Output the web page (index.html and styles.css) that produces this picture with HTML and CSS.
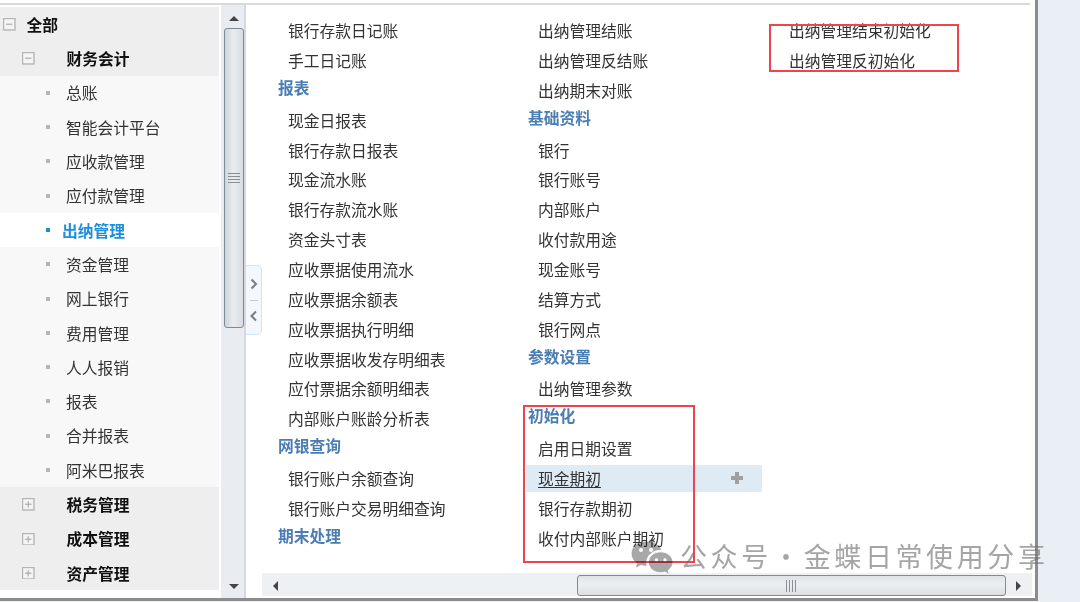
FILE: index.html
```html
<!DOCTYPE html>
<html lang="zh-CN">
<head>
<meta charset="utf-8">
<title>出纳管理</title>
<link rel="stylesheet" href="styles.css">
</head>
<body>
<div class="window">
  <div class="topline"></div>
  <div class="content">
    <nav class="sidebar">
      <div class="node root"><svg class="box" viewBox="0 0 12 12"><rect x=".5" y=".5" width="11" height="11"/><path d="M3 6h6"/></svg><span>全部</span></div>
      <div class="node group"><svg class="box" viewBox="0 0 12 12"><rect x=".5" y=".5" width="11" height="11"/><path d="M3 6h6"/></svg><span>财务会计</span></div>
      <div class="node leaf"><i></i><span>总账</span></div>
      <div class="node leaf"><i></i><span>智能会计平台</span></div>
      <div class="node leaf"><i></i><span>应收款管理</span></div>
      <div class="node leaf"><i></i><span>应付款管理</span></div>
      <div class="node leaf active"><i></i><span>出纳管理</span></div>
      <div class="node leaf"><i></i><span>资金管理</span></div>
      <div class="node leaf"><i></i><span>网上银行</span></div>
      <div class="node leaf"><i></i><span>费用管理</span></div>
      <div class="node leaf"><i></i><span>人人报销</span></div>
      <div class="node leaf"><i></i><span>报表</span></div>
      <div class="node leaf"><i></i><span>合并报表</span></div>
      <div class="node leaf"><i></i><span>阿米巴报表</span></div>
      <div class="node group"><svg class="box" viewBox="0 0 12 12"><rect x=".5" y=".5" width="11" height="11"/><path d="M3 6h6M6 3v6"/></svg><span>税务管理</span></div>
      <div class="node group"><svg class="box" viewBox="0 0 12 12"><rect x=".5" y=".5" width="11" height="11"/><path d="M3 6h6M6 3v6"/></svg><span>成本管理</span></div>
      <div class="node group"><svg class="box" viewBox="0 0 12 12"><rect x=".5" y=".5" width="11" height="11"/><path d="M3 6h6M6 3v6"/></svg><span>资产管理</span></div>
    </nav>

    <div class="vscroll">
      <div class="arrow-v up"></div>
      <div class="vthumb"><svg class="grip" width="12" height="13" viewBox="0 0 12 13"><path d="M0 1.500h12M0 4.500h12M0 7.500h12M0 10.500h12"/></svg></div>
      <div class="arrow-v down"></div>
    </div>

    <div class="handle-col">
      <div class="handle">
        <svg width="10" height="12" viewBox="0 0 10 12"><path d="M2.500 1.500 7 6l-4.500 4.500"/></svg>
        <b></b>
        <svg width="10" height="12" viewBox="0 0 10 12"><path d="M7 1.500 2.500 6 7 10.500"/></svg>
      </div>
    </div>

    <main class="main">
      <div class="columns">
        <section class="col">
          <div class="item">银行存款日记账</div>
          <div class="item">手工日记账</div>
          <div class="head">报表</div>
          <div class="item">现金日报表</div>
          <div class="item">银行存款日报表</div>
          <div class="item">现金流水账</div>
          <div class="item">银行存款流水账</div>
          <div class="item">资金头寸表</div>
          <div class="item">应收票据使用流水</div>
          <div class="item">应收票据余额表</div>
          <div class="item">应收票据执行明细</div>
          <div class="item">应收票据收发存明细表</div>
          <div class="item">应付票据余额明细表</div>
          <div class="item">内部账户账龄分析表</div>
          <div class="head">网银查询</div>
          <div class="item">银行账户余额查询</div>
          <div class="item">银行账户交易明细查询</div>
          <div class="head">期末处理</div>
        </section>
        <section class="col">
          <div class="item">出纳管理结账</div>
          <div class="item">出纳管理反结账</div>
          <div class="item">出纳期末对账</div>
          <div class="head">基础资料</div>
          <div class="item">银行</div>
          <div class="item">银行账号</div>
          <div class="item">内部账户</div>
          <div class="item">收付款用途</div>
          <div class="item">现金账号</div>
          <div class="item">结算方式</div>
          <div class="item">银行网点</div>
          <div class="head">参数设置</div>
          <div class="item">出纳管理参数</div>
          <div class="head">初始化</div>
          <div class="item">启用日期设置</div>
          <div class="item hover"><u>现金期初</u><svg class="plus" width="12" height="12" viewBox="0 0 12 12"><path d="M6 0v12M0 6h12"/></svg></div>
          <div class="item">银行存款期初</div>
          <div class="item">收付内部账户期初</div>
        </section>
        <section class="col col-last">
          <div class="item">出纳管理结束初始化</div>
          <div class="item">出纳管理反初始化</div>
        </section>
      </div>
      <div class="hscroll">
        <div class="arrow-h left"></div>
        <div class="hthumb"><svg class="grip" width="13" height="12" viewBox="0 0 13 12"><path d="M1.500 0v12M4.500 0v12M7.500 0v12M10.500 0v12"/></svg></div>
        <div class="arrow-h right"></div>
      </div>
    </main>
  </div>

  <div class="mark mark-a"></div>
  <div class="mark mark-b"></div>
</div>

<div class="watermark">
  <svg class="wm-icon" width="44" height="36" viewBox="0 0 44 36">
    <path class="wm-a" d="M16 1C7.500 1 1 6.700 1 13.600c0 4 2.200 7.400 5.600 9.700L5 28.500l5.900-3c1.700.5 3.300.8 5.100.8h1.300c-.4-1.200-.6-2.500-.6-3.800 0-6.800 6.300-12.200 14.100-12.200h1.100C30.300 4.700 23.800 1 16 1z"/>
    <path class="wm-a" d="M43 22.300c0-5.800-5.700-10.500-12.300-10.500-7 0-12.300 4.700-12.300 10.500s5.300 10.500 12.300 10.500c1.500 0 2.900-.3 4.300-.7l4.400 2.500-1.200-4.200c3-2.200 4.800-5 4.800-8.100z"/>
    <circle class="wm-b" cx="11" cy="10" r="2"/><circle class="wm-b" cx="21" cy="10" r="2"/>
    <circle class="wm-b" cx="26.500" cy="20" r="1.700"/><circle class="wm-b" cx="35" cy="20" r="1.700"/>
  </svg>
  <span class="wm-text">公众号 · 金蝶日常使用分享</span>
</div>
</body>
</html>
```
FILE: styles.css
```css
* { box-sizing: border-box; }
html, body { margin: 0; height: 100%; }
body {
  width: 1080px;
  height: 602px;
  overflow: hidden;
  background: #e9eff4;
  position: relative;
  font-family: "Noto Sans CJK SC", "Noto Sans", sans-serif;
  font-size: 15.75px;
  color: #333;
}
.window {
  position: relative;
  width: 1038px;
  height: 601px;
  padding-top: 3px;
  background: #fff;
  border-right: 3px solid #8c8c8c;
  border-bottom: 3px solid #8c8c8c;
  display: flex;
  flex-direction: column;
}
.topline { height: 2px; margin-right: 5px; background: #d9d9d9; flex: none; }
.content { flex: 1; display: flex; min-height: 0; }

.sidebar { width: 219px; flex: none; padding-top: 2.200px; }
.node { height: 34.3px; display: flex; align-items: center; position: relative; white-space: nowrap; }
.root, .group { background: #eeeeee; color: #111; font-weight: 700; }
.leaf { background: #f8f8f8; padding-left: 66px; }
.root { padding-left: 3px; gap: 11px; }
.group { padding-left: 22px; gap: 32px; }
.box { width: 12.500px; height: 12.500px; flex: none; fill: #f4f4f4; stroke: #b4b4b4; stroke-width: 1.300; }
.leaf i { position: absolute; left: 46px; top: 15px; width: 4px; height: 4px; background: #b5b5b5; }
.active { background: #fff; color: #1c8fdc; font-weight: 700; padding-left: 62px; }
.active i { background: #1c8fdc; }

.vscroll {
  width: 25px;
  flex: none;
  margin-left: 2px;
  background: #e9edf2;
  border-right: 2px solid #d5d9dd;
  display: flex;
  flex-direction: column;
  align-items: flex-start;
  padding-left: 3px;
}
.arrow-v { width: 0; height: 0; margin-left: 5px; border-left: 5px solid transparent; border-right: 5px solid transparent; flex: none; }
.up { border-bottom: 5px solid #444; margin-top: 11px; margin-bottom: 7px; }
.down { border-top: 5px solid #444; margin-top: auto; margin-bottom: 9px; }
.vthumb {
  width: 20px;
  height: 300px;
  flex: none;
  border: 1px solid #7e8a96;
  border-radius: 3px;
  background: linear-gradient(90deg, #cfd5dc, #e9ecf0 45%, #d9dde3);
  display: flex;
  align-items: center;
  justify-content: center;
}
.grip { fill: none; stroke: #8a8f95; stroke-width: 1; }

.handle-col { width: 16px; flex: none; padding-top: 260px; }
.handle {
  width: 16px;
  height: 70px;
  background: #f2f8fd;
  border: 1px solid #cfe4f5;
  border-left: 0;
  border-radius: 0 5px 5px 0;
  display: flex;
  flex-direction: column;
  align-items: center;
  justify-content: space-between;
  padding: 12px 0;
}
.handle svg { fill: none; stroke: #7d7d7d; stroke-width: 2; }
.handle b { width: 8px; height: 1px; background: #c9c9c9; }

.main { flex: 1; min-width: 0; display: flex; flex-direction: column; }
.columns { flex: 1; min-height: 0; display: flex; padding: 12.250px 0 0 16px; overflow: hidden; }
.col { width: 250px; flex: none; }
.col-last { margin-left: 1px; }
.item, .head { height: 27px; margin-bottom: 2.850px; white-space: nowrap; position: relative; }
.item { padding-left: 10px; line-height: 28px; }
.head { color: #4a7db3; font-weight: 700; line-height: 21px; }
.hover { margin-left: -2px; width: 236px; padding-left: 12px; background: #dfebf4; }
.hover u { text-underline-offset: 2px; }
.plus { position: absolute; left: 205px; top: 7px; fill: none; stroke: #a0a0a0; stroke-width: 4; }

.hscroll {
  height: 23px;
  flex: none;
  margin: 0 3px 2px 0;
  background: #eef1f4;
  display: flex;
  align-items: flex-end;
  position: relative;
  padding-left: 315px;
}
.hthumb {
  width: 429px;
  height: 21px;
  border: 1px solid #7e8a96;
  border-radius: 3px;
  background: linear-gradient(180deg, #dfe3e8, #eceff2 45%, #dcdfe4);
  display: flex;
  align-items: center;
  justify-content: center;
}
.arrow-h { position: absolute; top: 8px; width: 0; height: 0; border-top: 5px solid transparent; border-bottom: 5px solid transparent; }
.left { left: 11px; border-right: 5px solid #444; }
.right { left: 754px; border-left: 5px solid #444; }

.mark { position: absolute; border: 2px solid #f0434e; pointer-events: none; }
.mark-a { left: 523px; top: 405px; width: 172px; height: 158px; }
.mark-b { left: 769px; top: 24px; width: 190px; height: 48px; }

.watermark {
  position: absolute;
  left: 630px;
  top: 540px;
  display: flex;
  align-items: center;
  gap: 6px;
  color: rgba(110, 110, 110, .62);
  white-space: nowrap;
  font-size: 27px;
  letter-spacing: 3.600px;
  word-spacing: -9px;
}
.wm-text { margin-top: -5px; }
.wm-icon { mix-blend-mode: multiply; }
.wm-a { fill: #a8a8a8; stroke: #fff; stroke-width: 1; }
.wm-b { fill: #fff; }
```
